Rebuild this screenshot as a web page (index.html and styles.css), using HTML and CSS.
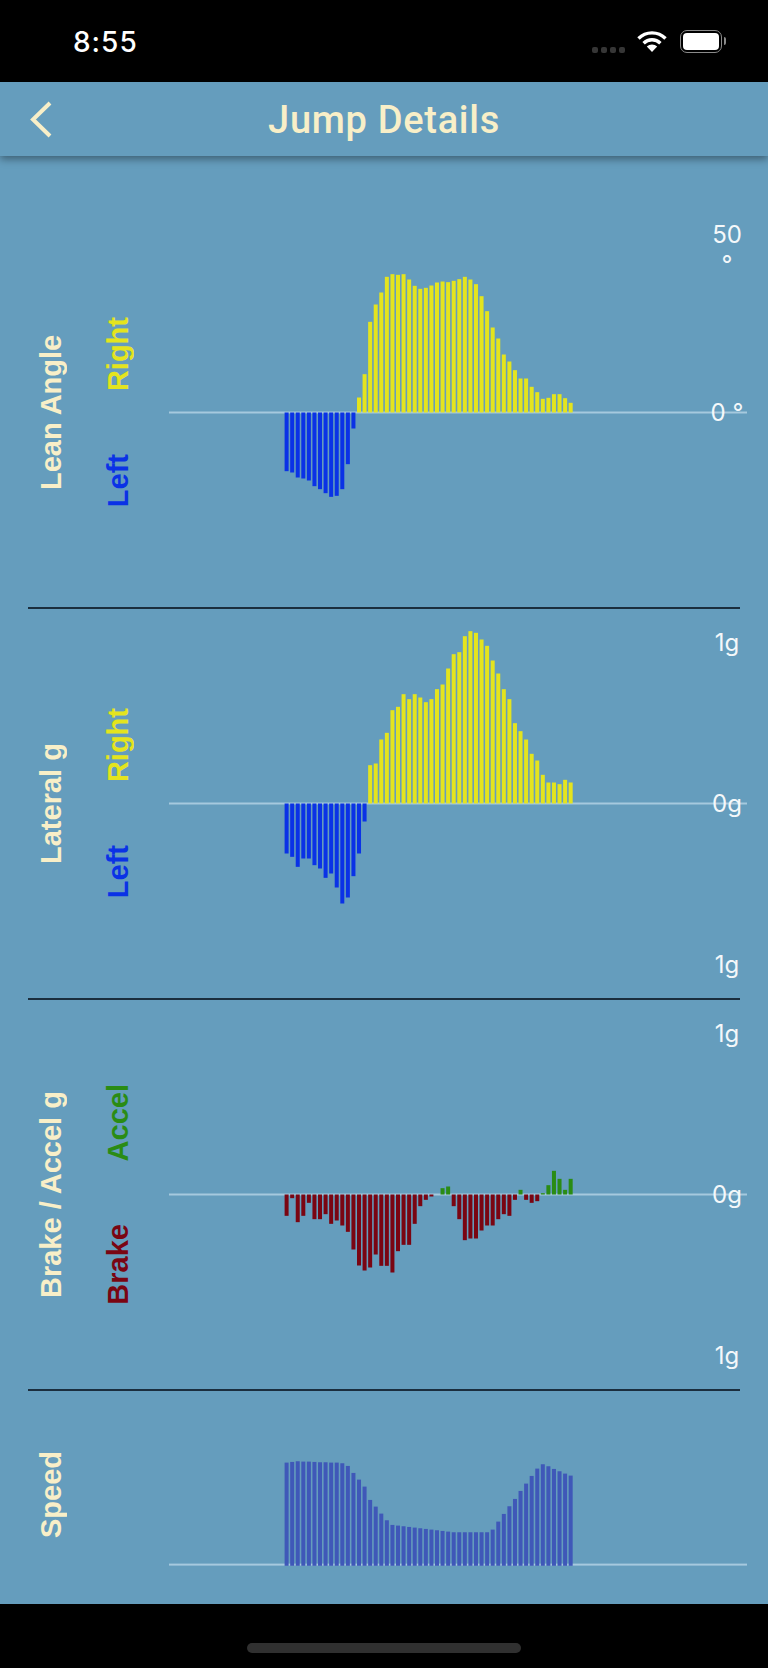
FILE: index.html
```html
<!DOCTYPE html>
<html lang="en">
<head>
    <meta charset="UTF-8">
    <meta name="viewport" content="width=device-width, initial-scale=1.0">
    <title>Jump Details</title>
    <link rel="stylesheet" href="styles.css">
    <script src="app.js"></script>
</head>
<body>
    <div class="status-bar">
        <div class="status-time">8:55</div>
        <div class="status-icons">
            <div class="signal">
                <span></span><span></span><span></span><span></span>
            </div>
            <svg class="wifi" viewBox="0 0 30 21" width="30" height="21">
                <path d="M1.5 7.5 A19 19 0 0 1 28.5 7.5" fill="none" stroke="#fff" stroke-width="3.4"/>
                <path d="M6.6 12.2 A12 12 0 0 1 23.4 12.2" fill="none" stroke="#fff" stroke-width="3.4"/>
                <path d="M15 21 L9.8 15.6 A7.4 7.4 0 0 1 20.2 15.6 Z" fill="#fff"/>
            </svg>
            <div class="battery">
                <div class="battery-fill"></div>
            </div>
        </div>
    </div>

    <div class="nav-bar">
        <svg class="back" viewBox="0 0 22 37" width="22" height="37">
            <path d="M20 2 L3 18.5 L20 35" fill="none" stroke="#f8efc8" stroke-width="4"/>
        </svg>
        <div class="nav-title">Jump Details</div>
    </div>

    <div class="content">
        <div class="row">
            <div class="row-title">Lean Angle</div>
            <div class="legend">
                <div class="legend-up yellow">Right</div>
                <div class="legend-down blue">Left</div>
            </div>
            <div class="plot">
                <svg class="chart" data-chart="lean"></svg>
                <div class="tick tick-lean">50<br>°</div>
                <div class="tick tick-mid">0 °</div>
            </div>
        </div>
        <div class="divider"></div>

        <div class="row">
            <div class="row-title">Lateral g</div>
            <div class="legend">
                <div class="legend-up yellow">Right</div>
                <div class="legend-down blue">Left</div>
            </div>
            <div class="plot">
                <svg class="chart" data-chart="lateral"></svg>
                <div class="tick tick-top">1g</div>
                <div class="tick tick-mid">0g</div>
                <div class="tick tick-bottom">1g</div>
            </div>
        </div>
        <div class="divider"></div>

        <div class="row">
            <div class="row-title">Brake / Accel g</div>
            <div class="legend">
                <div class="legend-up green">Accel</div>
                <div class="legend-down red">Brake</div>
            </div>
            <div class="plot">
                <svg class="chart" data-chart="brake"></svg>
                <div class="tick tick-top">1g</div>
                <div class="tick tick-mid">0g</div>
                <div class="tick tick-bottom">1g</div>
            </div>
        </div>
        <div class="divider"></div>

        <div class="row row-speed">
            <div class="row-title">Speed</div>
            <div class="legend"></div>
            <div class="plot">
                <svg class="chart" data-chart="speed"></svg>
            </div>
        </div>
    </div>

    <div class="home-area">
        <div class="home-indicator"></div>
    </div>
</body>
</html>
```

FILE: styles.css
```css
/* Global Styles */
body {
    font-family: "Liberation Sans", Arial, sans-serif;
    margin: 0;
    padding: 0;
    width: 768px;
    height: 1668px;
    display: flex;
    flex-direction: column;
    background-color: #000;
    overflow: hidden;
}

/* Status Bar */
.status-bar {
    height: 82px;
    flex: none;
    display: flex;
    justify-content: space-between;
    align-items: flex-start;
    padding: 0 46px 0 73px;
    box-sizing: border-box;
    background-color: #000;
}

.status-time {
    color: #fff;
    font-family: Inter, sans-serif;
    font-size: 28px;
    font-weight: 500;
    letter-spacing: 1px;
    line-height: 34px;
    margin-top: 25px;
}

.status-icons {
    display: flex;
    align-items: flex-start;
    margin-top: 30px;
}

.signal {
    display: flex;
    gap: 3px;
    margin-top: 17px;
    margin-right: 12px;
}

.signal span {
    width: 6px;
    height: 6px;
    border-radius: 2px;
    background-color: #363636;
}

.wifi {
    margin-top: 1px;
    margin-right: 13px;
}

.battery {
    position: relative;
    width: 42px;
    height: 23px;
    padding: 2px;
    box-sizing: border-box;
    border: 1.5px solid #8a8a8a;
    border-radius: 7px;
}

.battery::after {
    content: "";
    position: absolute;
    top: 6px;
    right: -5px;
    width: 2px;
    height: 8px;
    border-radius: 0 2px 2px 0;
    background-color: #8a8a8a;
}

.battery-fill {
    height: 100%;
    border-radius: 4px;
    background-color: #fff;
}

/* Nav Bar */
.nav-bar {
    height: 74px;
    flex: none;
    position: relative;
    z-index: 1;
    display: flex;
    align-items: center;
    justify-content: center;
    background-color: #659dbd;
    box-shadow: 0 3px 8px rgba(0, 0, 0, 0.4);
}

.back {
    position: absolute;
    left: 30px;
    top: 19px;
}

.nav-title {
    color: #f8efc8;
    font-family: Roboto, sans-serif;
    font-size: 38px;
    font-weight: 500;
    letter-spacing: 0.7px;
    margin-top: 1px;
}

/* Chart Rows */
.content {
    flex: 1;
    padding-top: 62px;
    background-color: #659dbd;
}

.row {
    height: 389px;
    display: flex;
    padding: 0 21px 0 28px;
}

.row-speed {
    height: 213px;
}

.row-speed .row-title {
    margin-bottom: 6px;
}

.row-title {
    width: 46px;
    flex: none;
    writing-mode: vertical-rl;
    transform: rotate(180deg);
    text-align: center;
    line-height: 46px;
    color: #f8efc8;
    font-size: 29px;
    font-weight: bold;
}

.legend {
    width: 95px;
    flex: none;
    display: flex;
    flex-direction: column;
    align-items: flex-end;
    justify-content: center;
    gap: 63px;
    padding-right: 36px;
    box-sizing: border-box;
    font-size: 29px;
    font-weight: bold;
}

.legend-up,
.legend-down {
    writing-mode: vertical-rl;
    transform: rotate(180deg);
    line-height: 30px;
}

.yellow { color: #e4e41e; }
.blue { color: #0a32e6; }
.green { color: #2a8c14; }
.red { color: #7a0512; }

.divider {
    height: 2px;
    margin: 0 28px;
    background-color: #1b2e3e;
}

/* Plot */
.plot {
    position: relative;
    flex: 1;
}

.chart {
    display: block;
    width: 100%;
    height: 100%;
}

.tick {
    position: absolute;
    right: -10px;
    width: 60px;
    text-align: center;
    color: #f4f8fa;
    font-family: Inter, sans-serif;
    font-size: 24px;
    font-weight: 400;
    line-height: 28px;
}

.tick-lean {
    top: 2px;
    line-height: 30px;
}

.tick-top {
    top: 20px;
}

.tick-mid {
    top: 50%;
    transform: translateY(-50%);
}

.tick-bottom {
    bottom: 19px;
}

/* Home Indicator */
.home-area {
    height: 64px;
    flex: none;
    display: flex;
    align-items: flex-start;
    justify-content: center;
    background-color: #000;
}

.home-indicator {
    width: 274px;
    height: 10px;
    margin-top: 39px;
    border-radius: 5px;
    background-color: #303030;
}
```

FILE: app.js
```js
// bar values were read at 3x, so everything is divided by 3 when drawn
const COLORS = {
    yellow: "#e4e41e",
    blue: "#0a32e6",
    green: "#2a8c14",
    red: "#7a0512",
    speed: "#3f58b8"
};

const PITCH = 5.57;
const BAR_WIDTH = 4;
const BARS_LEFT = 115.6;

// positive goes up from the axis, negative goes down
const CHARTS = {
    lean: {
        up: "yellow",
        down: "blue",
        values: [
            -176, -180, -195, -198, -204, -221, -230, -242, -253, -250, -230, -155, -48,
            45, 115, 272, 324, 360, 407, 415, 413, 415, 399, 380, 371, 374, 381, 390,
            393, 391, 395, 400, 407, 399, 385, 349, 304, 255, 222, 174, 153, 127, 102,
            102, 77, 61, 41, 44, 55, 55, 43, 29
        ]
    },
    lateral: {
        up: "yellow",
        down: "blue",
        values: [
            -150, -160, -190, -165, -165, -185, -195, -223, -210, -252, -300, -282, -218,
            -150, -54, 115, 120, 192, 212, 280, 290, 328, 313, 328, 318, 304, 313, 343,
            357, 405, 448, 454, 502, 517, 512, 492, 473, 429, 390, 343, 313, 241, 217,
            192, 149, 129, 86, 63, 63, 58, 71, 63
        ]
    },
    brake: {
        up: "green",
        down: "red",
        values: [
            -64, -11, -83, -64, -25, -74, -74, -59, -88, -78, -93, -112, -165, -213, -228,
            -219, -180, -214, -214, -234, -170, -151, -151, -88, -35, -16, -6, 0, 19, 24,
            -35, -74, -137, -132, -132, -108, -93, -93, -74, -59, -64, -16, 14, -16, -25,
            -20, 4, 28, 71, 47, 14, 47
        ]
    },
    speed: {
        up: "speed",
        down: "speed",
        axis: 173.6,
        overhang: 1.2,
        values: [
            306, 308, 310, 309, 309, 308, 307, 307, 306, 306, 304, 296, 275, 255, 234,
            194, 174, 153, 133, 119, 117, 115, 113, 111, 109, 107, 105, 103, 101, 99,
            97, 97, 97, 97, 97, 97, 97, 105, 129, 152, 175, 197, 221, 243, 266, 288,
            301, 295, 287, 280, 273, 267
        ]
    }
};

function addRect(svg, x, y, width, height, fill) {
    const rect = document.createElementNS("http://www.w3.org/2000/svg", "rect");
    rect.setAttribute("x", x);
    rect.setAttribute("y", y);
    rect.setAttribute("width", width);
    rect.setAttribute("height", height);
    rect.setAttribute("fill", fill);
    svg.appendChild(rect);
}

document.addEventListener("DOMContentLoaded", () => {
    document.querySelectorAll(".chart").forEach((svg) => {
        const chart = CHARTS[svg.dataset.chart];
        const box = svg.getBoundingClientRect();
        const axis = chart.axis || box.height / 2;

        svg.setAttribute("viewBox", `0 0 ${box.width} ${box.height}`);
        addRect(svg, 0, axis - 1, box.width, 2, "#a6c9de");

        chart.values.forEach((value, i) => {
            const x = BARS_LEFT + i * PITCH;
            const height = Math.abs(value) / 3;
            if (value > 0) {
                addRect(svg, x, axis - height, BAR_WIDTH, height + (chart.overhang || 0), COLORS[chart.up]);
            } else if (value < 0) {
                addRect(svg, x, axis, BAR_WIDTH, height, COLORS[chart.down]);
            }
        });
    });
});
```
